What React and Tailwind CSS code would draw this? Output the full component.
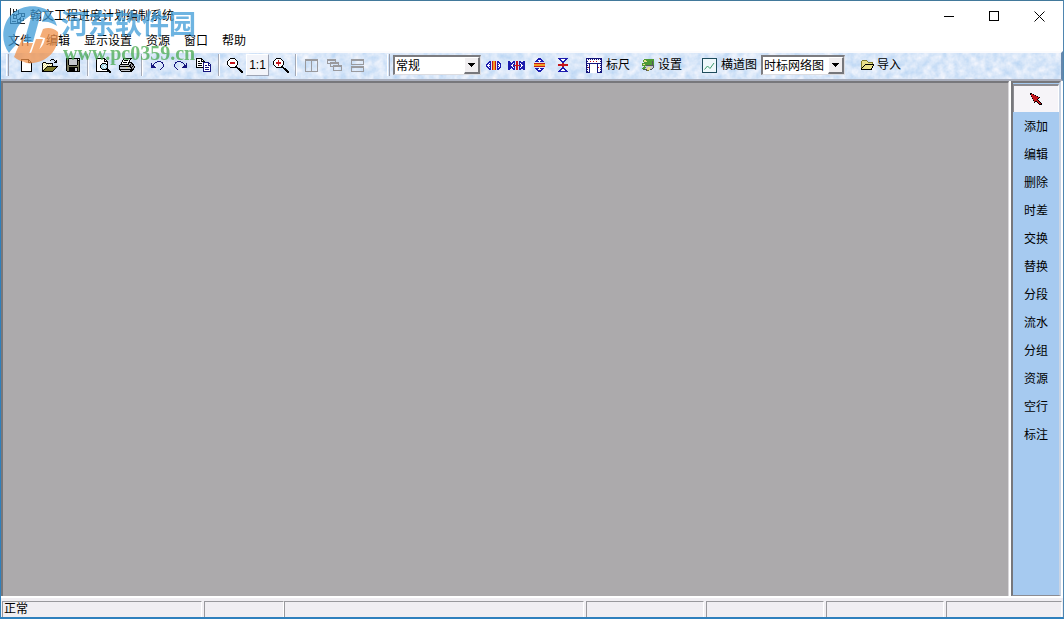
const COLORS = {
  k: '#000000',
  w: '#ffffff',
  g: '#9a9a9e',
  s: '#c4c6cc',
  d: '#55595a',
  o: '#7d7a2c',
  y: '#e8e08a',
  n: '#14147c',
  b: '#1c1cae',
  r: '#c4161c',
  a: '#f0a020',
  c: '#a8d8e8',
  e: '#4f9a35',
  m: '#76765a',
}

const ICONS = {
  new: [
    'kkkkkkkk...',
    'kwwwwwwkk..',
    'kwwwwwwkwk.',
    'kwwwwwwkkkk',
    'kwwwwwwwwwk',
    'kwwwwwwwwwk',
    'kwwwwwwwwwk',
    'kwwwwwwwwwk',
    'kwwwwwwwwwk',
    'kwwwwwwwwwk',
    'kwwwwwwwwwk',
    'kwwwwwwwwwk',
    'kkkkkkkkkkk',
  ],
  open: [
    '.........kkk....',
    '........k...k.k.',
    '.............kk.',
    '.kkk........kkk.',
    'kywykkkkkkk.....',
    'kwywywywywk.....',
    'kywywywywyk.....',
    'kwywykkkkkkkkkkk',
    'kywykoooooooook.',
    'kwykoooooooook..',
    'kykoooooooook...',
    'kkoooooooook....',
    'kkkkkkkkkkk.....',
  ],
  save: [
    'kkkkkkkkkkkkkk',
    'kmksssssssskwk',
    'kmksssssssskkk',
    'kmksssssssskmk',
    'kmksssssssskmk',
    'kmksssssssskmk',
    'kmksssssssskmk',
    'kmmkkkkkkkkmmk',
    'kmmmmmmmmmmmmk',
    'kmmkkkkkkkkkmk',
    'kmmkkkkkksskmk',
    'kmmkkkkkksskmk',
    'kmmkkkkkksskmk',
    '.kkkkkkkkkkkkk',
  ],
  preview: [
    'kkkkkkkkk.......',
    'kwwwwwwwkk......',
    'kwwwwwwwkwk.....',
    'kwwwwwwwkkkk....',
    'kwwwwwwwwwwk....',
    'kwwwwwkkkkwk....',
    'kwwwwkcccckk....',
    'kwwwkcccwcck....',
    'kwwwkccwcwck....',
    'kwwwkcccwcck....',
    'kwwwwkcccckk....',
    'kwwwwwkkkkkkk...',
    'kwwwwwwwwwwkkk..',
    'kkkkkkkkkkkkkkk.',
    '.............kk.',
  ],
  print: [
    '....kkkkkkkkk...',
    '....kwwwwwwk....',
    '...kwkkkkwk.....',
    '...kwwwwwwk.....',
    '..kwkkkkwkkkk...',
    '..kwwwwwwksskk..',
    '.kkkkkkkkkskgkk.',
    'kssssssssskkggk.',
    'kkkkkkkkkkkkgkgk',
    'kssssssyysskkggk',
    'kssssssssssskgk.',
    'kkkkkkkkkkkkkkk.',
    '.kssssssssskkk..',
    '..kkkkkkkkkkk...',
  ],
  undo: [
    '......nnnn...',
    '....nn....nn.',
    'n..n.......n.',
    'n.n.........n',
    'nnn.........n',
    'nnnn........n',
    'nnnnn......n.',
    '..........n..',
    '.........n...',
  ],
  redo: [
    '...nnnn......',
    '.nn....nn....',
    '.n.......n..n',
    'n.........n.n',
    'n.........nnn',
    'n........nnnn',
    '.n......nnnnn',
    '..n..........',
    '...n.........',
  ],
  copy: [
    'kkkkkk.........',
    'kwwwwkk........',
    'kwwwwkwk.......',
    'kwkkwkkkk......',
    'kwwwwwwnnnnnn..',
    'kwkkkkwnwwwwnn.',
    'kwwwwwwnwwwwnwn',
    'kwkkkkwnwnnwnnn',
    'kwwwwwwnwwwwwwn',
    'kkkkkkknwnnnnwn',
    '.......nwwwwwwn',
    '.......nwnnnnwn',
    '.......nwwwwwwn',
    '.......nnnnnnnn',
  ],
  zoomOut: [
    '...kkkkk........',
    '..kwwwwwk.......',
    '.kwwwwwwwk......',
    'kwwwwwwwwwk.....',
    'kwwrrrrrwwk.....',
    'kwwrrrrrwwk.....',
    'kwwwwwwwwwk.....',
    '.kwwwwwwwk......',
    '..kwwwwwkk......',
    '...kkkkkkkk.....',
    '..........kkk...',
    '...........kkk..',
    '............kkk.',
    '.............kkk',
    '..............kk',
  ],
  zoomIn: [
    '...kkkkk........',
    '..kwwwwwk.......',
    '.kwwwrwwwk......',
    'kwwwwrwwwwk.....',
    'kwwrrrrrwwk.....',
    'kwwrrrrrwwk.....',
    'kwwwwrwwwwk.....',
    '.kwwwrwwwk......',
    '..kwwwwwkk......',
    '...kkkkkkkk.....',
    '..........kkk...',
    '...........kkk..',
    '............kkk.',
    '.............kkk',
    '..............kk',
  ],
  columns: [
    'ggggggggggggg',
    'ggggggggggggg',
    'g.....g.....g',
    'g.....g.....g',
    'g.....g.....g',
    'g.....g.....g',
    'g.....g.....g',
    'g.....g.....g',
    'g.....g.....g',
    'g.....g.....g',
    'g.....g.....g',
    'g.....g.....g',
    'ggggggggggggg',
  ],
  cascade: [
    'ggggggggg......',
    'ggggggggg......',
    'g.......g......',
    'g..ggggggggg...',
    'gggggggggggg...',
    '...g.......g...',
    '...g..ggggggggg',
    '...gggggggggggg',
    '......g.......g',
    '......g.......g',
    '......g.......g',
    '......ggggggggg',
  ],
  rows: [
    'ggggggggggggg',
    'ggggggggggggg',
    'g...........g',
    'g...........g',
    'g...........g',
    'ggggggggggggg',
    '.............',
    'ggggggggggggg',
    'ggggggggggggg',
    'g...........g',
    'g...........g',
    'g...........g',
    'ggggggggggggg',
  ],
  widen: [
    '...bb.raar.bb..',
    '..bbb.raar.bbb.',
    '.bbwb.raar.bwbb',
    'bbwbb.raar.bbwb',
    'bwwwb.raar.bwwb',
    'bbwbb.raar.bbwb',
    '.bbwb.raar.bwbb',
    '..bbb.raar.bbb.',
    '...bb.raar.bb..',
  ],
  narrow: [
    'bb...bb.rr.bb..bb',
    'bbb.bbb.rr.bbbbbb',
    'bbbbbwb.rr.bwbbbb',
    'bbbbwbb.rr.bbwbbb',
    'bbbwwbrrrrrrbwwbb',
    'bbbbwbb.rr.bbwbbb',
    'bbbbbwb.rr.bwbbbb',
    'bbb.bbb.rr.bbbbbb',
    'bb...bb.rr.bb..bb',
  ],
  taller: [
    '....bbb....',
    '...bbbbb...',
    '..bbwwwbb..',
    '.bbbbwbbbb.',
    '...........',
    'rrrrrrrrrrr',
    'aaaaaaaaaaa',
    'aaaaaaaaaaa',
    'rrrrrrrrrrr',
    '...........',
    '.bbbbwbbbb.',
    '..bbwwwbb..',
    '...bbbbb...',
    '....bbb....',
  ],
  shorter: [
    'bbbbbbbbbb',
    '.bbwwwwbb.',
    '..bbwwbb..',
    '...bbbb...',
    '....bb....',
    '....rr....',
    'rrrrrrrrrr',
    'rrrrrrrrrr',
    '....rr....',
    '....bb....',
    '...bbbb...',
    '..bbwwbb..',
    '.bbwwwwbb.',
    'bbbbbbbbbb',
  ],
  ruler: [
    'nnnnnnnnnnnnnnnn',
    'nwnwnwnwnwnwnwnn',
    'nwwwwwwwwwwwwwwn',
    'nnwwrwwrwwrwwwnn',
    'nwwwwwwwwwwwwwwn',
    'nnnnnnnnnnnnnnnn',
    'nwwnwwwwwwwnwwwn',
    'nnwnwwwwwwwnwwnn',
    'nwwnwwwwwwwnwwwn',
    'nnrnwwwwwwwnrwnn',
    'nwwnwwwwwwwnwwwn',
    'nnwnwwwwwwwnwwnn',
    'nwwnwwwwwwwnwwwn',
    'nnwnwwwwwwwnwwnn',
    'nnnnwwwwwwwnnnnn',
  ],
  settings: [
    '..eeeeeeeeee',
    '.eyyeeeeeeee',
    '.eyyyeeeeede',
    '..eeeeeeeede',
    'eeeeeeeeeede',
    'eyyeeeeeeede',
    'eeeedddddddd',
    '..essssssssd',
    '.eeessyyyssd',
    'eeessyyyssd.',
    '.ddddyyydd..',
    '....doo.....',
  ],
  folder: [
    '.ooooo.......',
    'oyyyyyo......',
    'oyyyyyyooooo.',
    'oyyyyyyyyyyo.',
    'oyyykkkkkkkkk',
    'oyykyyyyyyyyk',
    'oykyyyyyyyyk.',
    'okyyyyyyyyyk.',
    'kyyyyyyyyyk..',
    'kkkkkkkkkkk..',
  ],
  pointer: [
    'kk..........',
    'krrk........',
    '.rrrrk......',
    '.krrrrrk....',
    '..rrrrrrrk..',
    '..krrrrrk...',
    '...rrrrk....',
    '...krrrrk...',
    '....rkkrrk..',
    '....k..krrk.',
    '........krrk',
    '.........kkk',
  ],
}

function PixelIcon({ name }) {
  const rows = ICONS[name]
  return (
    <svg
      aria-hidden="true"
      className="shrink-0"
      width={rows[0].length}
      height={rows.length}
      shapeRendering="crispEdges"
    >
      {rows.flatMap((row, y) =>
        [...row].map((key, x) =>
          COLORS[key] ? (
            <rect key={`${x}-${y}`} x={x} y={y} width="1" height="1" fill={COLORS[key]} />
          ) : null
        )
      )}
    </svg>
  )
}

function ToolButton({ icon, label }) {
  return (
    <button type="button" aria-label={label} className="grid h-6 w-[23px] shrink-0 place-items-center">
      <PixelIcon name={icon} />
    </button>
  )
}

function Separator() {
  return (
    <div className="flex w-2 shrink-0 justify-center">
      <div className="h-[22px] w-[2px] border-r border-l border-r-white border-l-[#a4a8b4]" />
    </div>
  )
}

function Grip() {
  return <div className="h-[22px] w-[3px] shrink-0 border-r border-l border-r-[#9a9eac] border-l-white" />
}

function Combo({ label, options, className }) {
  return (
    <div className={`relative h-5 shrink-0 ${className}`}>
      <select
        aria-label={label}
        className="block h-full w-full appearance-none border-t-2 border-r border-b border-l-2 border-t-[#7c7c80] border-r-[#dcdce0] border-b-[#dcdce0] border-l-[#7c7c80] bg-white pl-px text-[12px] leading-4"
      >
        {options.map((option) => (
          <option key={option}>{option}</option>
        ))}
      </select>
      <span className="pointer-events-none absolute top-[2px] right-px bottom-px grid w-4 place-items-center border-t border-r-2 border-b-2 border-l border-t-white border-r-[#77777b] border-b-[#77777b] border-l-white bg-[#f0eef0]">
        <svg aria-hidden="true" width="7" height="4" shapeRendering="crispEdges">
          <path d="M0 0h7v1h-1v1h-1v1h-1v1h-1v-1h-1v-1h-1v-1h-1z" />
        </svg>
      </span>
    </div>
  )
}

function ToolbarTexture() {
  return (
    <svg aria-hidden="true" className="absolute inset-0 h-full w-full">
      <filter id="marble" x="0" y="0" width="100%" height="100%" colorInterpolationFilters="sRGB">
        <feTurbulence type="fractalNoise" baseFrequency="0.13" numOctaves="3" seed="4" />
        <feColorMatrix values="0.3 0 0 0 0.7  0.17 0 0 0 0.82  0.05 0 0 0 0.95  0 0 0 0 1" />
      </filter>
      <rect width="100%" height="100%" filter="url(#marble)" />
    </svg>
  )
}

function Toolbar() {
  return (
    <div className="relative h-[30px] shrink-0 border-t-2 border-r-2 border-b-2 border-t-[#fbfbfd] border-r-[#6788ac] border-b-[#a9aebc]">
      <ToolbarTexture />
      <div role="toolbar" className="relative flex h-6 items-center pl-[5px]">
        <Grip />
        <div className="ml-[6px] flex items-center">
          <ToolButton icon="new" label="新建" />
          <ToolButton icon="open" label="打开" />
          <ToolButton icon="save" label="保存" />
          <Separator />
          <ToolButton icon="preview" label="打印预览" />
          <ToolButton icon="print" label="打印" />
          <Separator />
          <ToolButton icon="undo" label="撤销" />
          <ToolButton icon="redo" label="重做" />
          <ToolButton icon="copy" label="复制" />
          <Separator />
          <ToolButton icon="zoomOut" label="缩小" />
          <button
            type="button"
            className="h-[22px] w-[23px] border-t border-r border-b border-l border-t-white border-r-[#9ea4b4] border-b-[#9ea4b4] border-l-white bg-[#f2f4fa] text-[12px] leading-5"
          >
            1:1
          </button>
          <ToolButton icon="zoomIn" label="放大" />
          <Separator />
          <ToolButton icon="columns" label="垂直平铺" />
          <ToolButton icon="cascade" label="层叠" />
          <ToolButton icon="rows" label="水平平铺" />
        </div>
        <div className="ml-[18px] flex items-center gap-[3px]">
          <Grip />
          <Combo label="显示模式" options={['常规']} className="w-[88px]" />
        </div>
        <div className="ml-px flex items-center">
          <ToolButton icon="widen" label="加宽" />
          <ToolButton icon="narrow" label="缩窄" />
          <ToolButton icon="taller" label="加高" />
          <ToolButton icon="shorter" label="降低" />
        </div>
        <button type="button" className="ml-3 flex shrink-0 items-center gap-1">
          <PixelIcon name="ruler" />
          标尺
        </button>
        <button type="button" className="ml-3 flex shrink-0 items-center gap-1">
          <PixelIcon name="settings" />
          设置
        </button>
        <button type="button" className="ml-5 flex shrink-0 items-center gap-1">
          <svg aria-hidden="true" width="15" height="15" fill="none">
            <rect x="0.5" y="0.5" width="14" height="14" fill="#eef8fb" stroke="#1e4c5c" />
            <path d="M2.5 11.5 5.5 8l2.5 2.500 4-5.500" stroke="#3c9a68" />
          </svg>
          横道图
        </button>
        <Combo label="图表类型" options={['时标网络图']} className="ml-1 w-[84px]" />
        <button type="button" className="ml-4 flex shrink-0 items-center gap-[3px]">
          <PixelIcon name="folder" />
          导入
        </button>
      </div>
    </div>
  )
}

function AppIcon() {
  return (
    <svg aria-hidden="true" width="16" height="16" fill="none" stroke="#222" shapeRendering="crispEdges">
      <path d="M1.500 0v15.500H16M4.500 1v4M7.500 1v3M4 3.500h4M12 5.500h3v3h-3zM4 7.500h3v3H4zM8 11.500h3v3H8zM12 12.500h3" />
      <path d="M7 7l5-2M7 10l2 2M12 9l-2 3M3 6h3M9 2v4M3 13h4M14 10v3" />
    </svg>
  )
}

function TitleBar() {
  return (
    <header className="flex h-[30px] shrink-0 items-center bg-white">
      <div className="flex flex-1 items-center gap-[5px] pl-2">
        <AppIcon />
        <h1>翰文工程进度计划编制系统</h1>
      </div>
      <button type="button" aria-label="最小化" className="grid h-7 w-[45px] place-items-center">
        <svg aria-hidden="true" width="10" height="10" stroke="#000" shapeRendering="crispEdges">
          <path d="M0 5.500h10" />
        </svg>
      </button>
      <button type="button" aria-label="最大化" className="grid h-7 w-[45px] place-items-center">
        <svg aria-hidden="true" width="10" height="10" fill="none" stroke="#000" shapeRendering="crispEdges">
          <path d="M0.500 0.500h9v9h-9z" />
        </svg>
      </button>
      <button type="button" aria-label="关闭" className="grid h-7 w-[47px] place-items-center">
        <svg aria-hidden="true" width="11" height="11" stroke="#000">
          <path d="M0.500 0.500l10 10M10.500 0.500l-10 10" />
        </svg>
      </button>
    </header>
  )
}

const MENUS = ['文件', '编辑', '显示设置', '资源', '窗口', '帮助']

function MenuBar() {
  return (
    <nav className="flex h-5 shrink-0 items-center gap-[14px] bg-white pl-[7px]">
      {MENUS.map((menu) => (
        <button key={menu} type="button">
          {menu}
        </button>
      ))}
    </nav>
  )
}

const TOOLS = ['添加', '编辑', '删除', '时差', '交换', '替换', '分段', '流水', '分组', '资源', '空行', '标注']

function Sidebar() {
  return (
    <aside className="flex w-[50px] shrink-0 flex-col border-t-2 border-r-2 border-b border-l-2 border-t-[#77777b] border-r-[#c9d4e4] border-b-[#8c8c92] border-l-[#77777b] bg-[#a6caf0] pt-px">
      <button
        type="button"
        aria-label="选择"
        aria-pressed="true"
        className="grid h-7 place-items-center border-t-2 border-r border-l border-t-[#8c8c92] border-r-white border-l-[#8c8c92] bg-[#f6f4f8]"
      >
        <PixelIcon name="pointer" />
      </button>
      {TOOLS.map((tool) => (
        <button key={tool} type="button" className="h-7 pt-[2px]">
          {tool}
        </button>
      ))}
    </aside>
  )
}

const PANEL = 'h-4 border-t border-l border-t-[#98989c] border-l-[#98989c] border-r border-r-white'

function StatusBar() {
  return (
    <footer className="flex h-[21px] shrink-0 items-end gap-[2px] border-t-2 border-t-white bg-[#f0eef2] px-px">
      <div className={`${PANEL} w-[200px] pl-px leading-[14px]`}>正常</div>
      <div className={`${PANEL} w-[80px]`} />
      <div className={`${PANEL} -ml-[2px] w-[300px]`} />
      <div className={`${PANEL} w-[118px]`} />
      <div className={`${PANEL} w-[118px]`} />
      <div className={`${PANEL} w-[118px]`} />
      <div className={`${PANEL} flex-1`} />
    </footer>
  )
}

function Watermark() {
  return (
    <div className="pointer-events-none absolute top-0 left-0 opacity-75">
      <svg aria-hidden="true" className="absolute top-0 left-0" width="60" height="66">
        <path d="M50 12C40 3 22 3 11 13 1 22-1 40 8 52c2-3 4-5 7-8-3-9 0-18 7-24l8-6c7-3 14-4 20-2z" fill="#3e9bd8" />
        <path d="M33 11h11l-3 10c6-1 10 1 15 4-2-7-6-12-11-16z" fill="#3e9bd8" />
        <path d="M31 13l9-1-8 29h-9z" fill="#3e9bd8" />
        <path d="M42 28c5-2 11-1 15 3 2 15-8 29-25 31-3 1-7 0-9-1l4-9c9 0 16-6 17-15l-5-1z" fill="#f1924b" />
        <path d="M24 34l-2 8h10l-7 19c-5 0-9-3-12-5 3-8 6-15 11-22z" fill="#f1924b" />
        <path d="M35 38h7l-6 17h-7z" fill="#f1924b" />
      </svg>
      <p className="absolute top-[9px] left-[60px] text-[27px] leading-[30px] font-bold whitespace-nowrap text-[#3e9bd8]">
        河东软件园
      </p>
      <p className="absolute top-[40px] left-[62px] font-['Liberation_Serif',serif] text-[20px] leading-6 font-bold whitespace-nowrap text-[#48aa50]">
        www.pc0359.cn
      </p>
    </div>
  )
}

export default function App() {
  return (
    <div className="relative flex min-h-screen flex-col overflow-hidden border-t border-r border-b-2 border-l border-t-[#42799b] border-r-[#4f86b0] border-b-[#2f80bd] border-l-[#2f80bd] bg-white font-['Liberation_Sans','Noto_Sans_CJK_SC',sans-serif] text-[12px] leading-4 text-black">
      <TitleBar />
      <MenuBar />
      <Toolbar />
      <div className="flex flex-1 gap-[2px] bg-white pr-[2px]">
        <main className="flex-1 border-t-2 border-r border-l-2 border-t-[#77777b] border-r-[#d8d6da] border-l-[#77777b] bg-[#acaaac]" />
        <Sidebar />
      </div>
      <StatusBar />
      <Watermark />
    </div>
  )
}
